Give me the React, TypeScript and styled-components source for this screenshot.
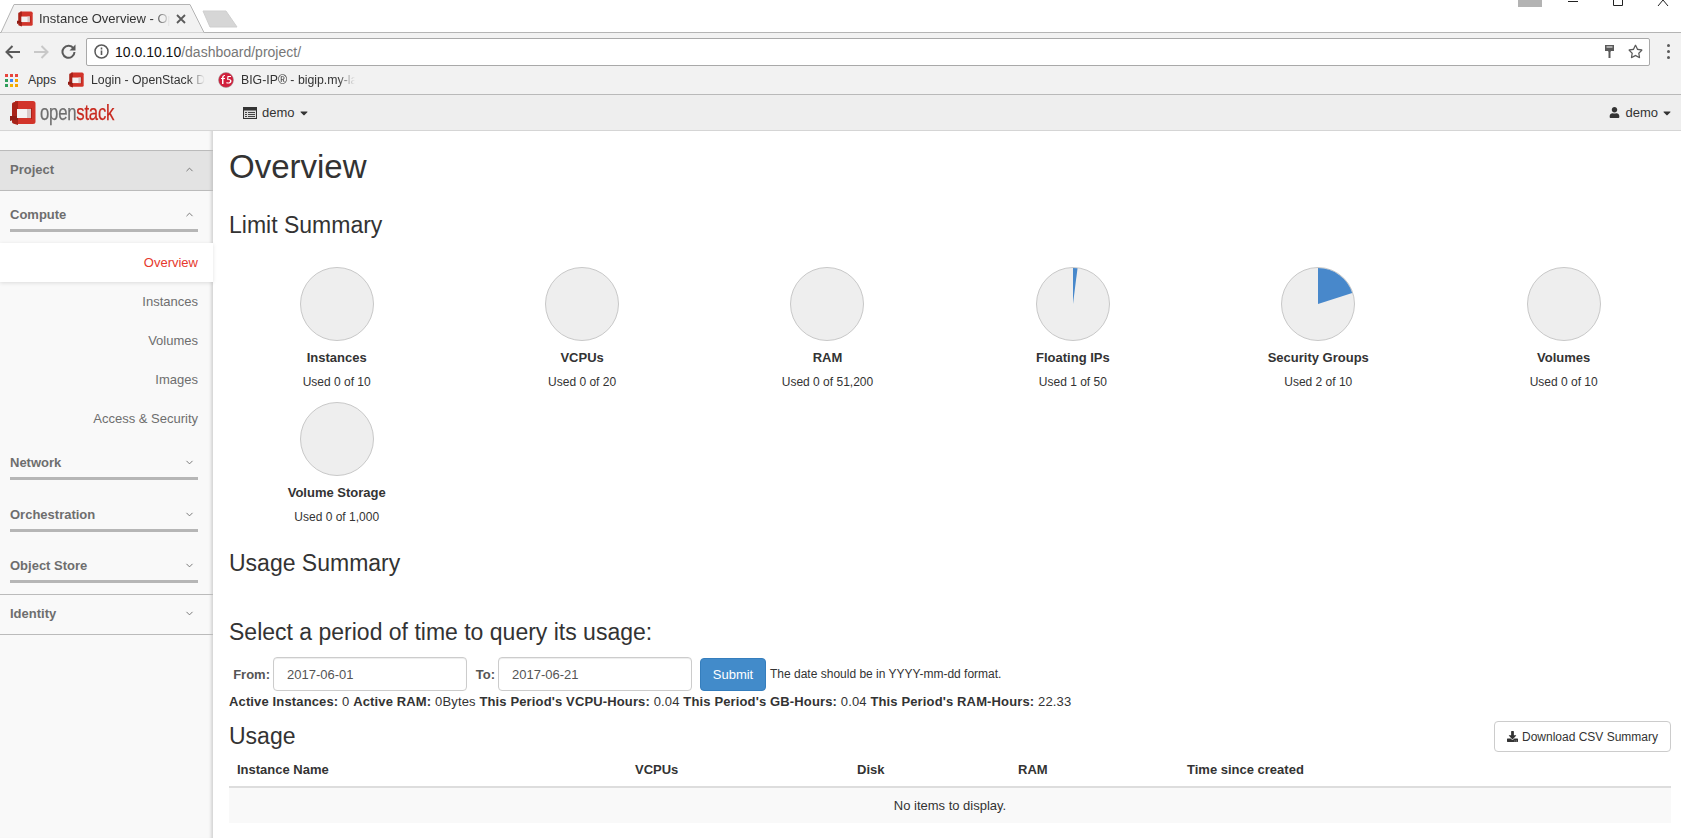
import React from 'react';
import styled, { createGlobalStyle } from 'styled-components';
import { FaCaretDown, FaDownload, FaUser, FaRegStar } from 'react-icons/fa';
import { ChevronDown, ChevronUp } from 'lucide-react';

const GlobalStyle = createGlobalStyle`
  html, body {
    margin: 0;
    padding: 0;
    background: #fff;
    font-family: "Liberation Sans", Arial, sans-serif;
    color: #333;
  }
  * { box-sizing: border-box; }
`;

const charts = [
  { name: 'Instances', used: 'Used 0 of 10', pct: 0 },
  { name: 'VCPUs', used: 'Used 0 of 20', pct: 0 },
  { name: 'RAM', used: 'Used 0 of 51,200', pct: 0 },
  { name: 'Floating IPs', used: 'Used 1 of 50', pct: 0.02 },
  { name: 'Security Groups', used: 'Used 2 of 10', pct: 0.2 },
  { name: 'Volumes', used: 'Used 0 of 10', pct: 0 },
  { name: 'Volume Storage', used: 'Used 0 of 1,000', pct: 0 },
];

const appColors = ['#e8453c', '#e8453c', '#e8453c', '#2f9e5b', '#4285f4', '#f4a400', '#2f9e5b', '#f4b400', '#f4a400'];

const OpenStackMark = ({ size }: { size: number }) => (
  <svg width={size} height={size} viewBox="0 0 26 24">
    <path d="M5 0h18a2.500 2.500 0 0 1 2.500 2.500v18a2.500 2.500 0 0 1-2.500 2.500H5z" fill="#d2342a" />
    <path d="M3 1.500L8 0v24l-5-1.500a2 2 0 0 1-1-2V3.500a2 2 0 0 1 1-2z" fill="#a92218" />
    <path d="M0 15h8v4H3l-3 1z" fill="#8f1c14" />
    <rect x="7" y="8" width="14" height="9" fill="#f4f2f2" />
    <rect x="17" y="8" width="4" height="9" fill="#d8c8c8" />
    <rect x="21" y="7" width="1" height="11" fill="#a92218" />
  </svg>
);

const Pie = ({ pct }: { pct: number }) => {
  const r = 36;
  const a = pct * 2 * Math.PI;
  const x = 37 + r * Math.sin(a);
  const y = 37 - r * Math.cos(a);
  return (
    <svg width="74" height="74" viewBox="0 0 74 74">
      <circle cx="37" cy="37" r="36.5" fill="#eeeeee" stroke="#c8c8c8" strokeWidth="1" />
      {pct > 0 && <path d={`M37 37L37 1A36 36 0 0 1 ${x} ${y}Z`} fill="#4888cb" />}
    </svg>
  );
};

const App = () => (
  <Page>
    <GlobalStyle />
    <TabStrip>
      <Tab>
        <TabShape width="206" height="29" viewBox="0 0 206 29">
          <path d="M0 28.500H1L14 .5H190L204 28.500H206" fill="#f2f2f2" stroke="#b4b4b4" />
        </TabShape>
        <OpenStackMark size={16} />
        <TabTitle>Instance Overview - OpenStack Dashboard</TabTitle>
        <CloseIcon width="10" height="10" viewBox="0 0 10 10">
          <path d="M1 1l8 8M9 1l-8 8" stroke="#5a5a5a" strokeWidth="1.800" />
        </CloseIcon>
      </Tab>
      <NewTab width="36" height="18" viewBox="0 0 36 18">
        <path d="M1 1h23l11 16H8z" fill="#d6d6d6" stroke="#cfcfcf" strokeLinejoin="round" />
      </NewTab>
      <WindowControls>
        <UserChip />
        <svg width="12" height="8" viewBox="0 0 12 8">
          <path d="M1 1.500h10" stroke="#222" />
        </svg>
        <svg width="12" height="8" viewBox="0 0 12 8">
          <path d="M1.500 0v5.500h9V0" stroke="#222" fill="none" />
        </svg>
        <svg width="12" height="8" viewBox="0 0 12 8">
          <path d="M1 6l5-6 5 6" stroke="#222" fill="none" />
        </svg>
      </WindowControls>
    </TabStrip>
    <Toolbar>
      <NavButtons>
        <svg width="16" height="14" viewBox="0 0 16 14">
          <path d="M15 7H2M7.500 1L1.500 7l6 6" stroke="#5a5a5a" strokeWidth="2" fill="none" />
        </svg>
        <svg width="16" height="14" viewBox="0 0 16 14">
          <path d="M1 7h13M8.500 1l6 6-6 6" stroke="#c8c8c8" strokeWidth="2" fill="none" />
        </svg>
        <svg width="15" height="15" viewBox="0 0 15 15">
          <path d="M12.500 4.500A6 6 0 1 0 13.500 8" stroke="#5a5a5a" strokeWidth="2" fill="none" />
          <path d="M14.500 0.500v6h-6z" fill="#5a5a5a" />
        </svg>
      </NavButtons>
      <Omnibox>
        <svg width="15" height="15" viewBox="0 0 15 15">
          <circle cx="7.500" cy="7.500" r="6.500" stroke="#5a5a5a" strokeWidth="1.500" fill="none" />
          <path d="M7.500 6.500v4.500M7.500 3.500v2" stroke="#5a5a5a" strokeWidth="1.600" />
        </svg>
        <Url>
          10.0.10.10<UrlPath>/dashboard/project/</UrlPath>
        </Url>
        <OmniIcons>
          <svg width="9" height="13" viewBox="0 0 9 13">
            <path d="M0 0h9v6H6v.5h-.5V13h-2V6.500H3V6H0z" fill="#5a5a5a" />
            <path d="M1.500 1.500h6v1h-6z" fill="#fff" />
          </svg>
          <FaRegStar size={15} color="#5a5a5a" />
        </OmniIcons>
      </Omnibox>
      <MenuDots>
        <i />
        <i />
        <i />
      </MenuDots>
    </Toolbar>
    <BookmarksBar>
      <AppsGrid>
        {appColors.map((c, i) => (
          <AppsDot key={i} $color={c} />
        ))}
      </AppsGrid>
      <Bookmark $width={28}>Apps</Bookmark>
      <BookmarkIcon $left={12}>
        <OpenStackMark size={16} />
      </BookmarkIcon>
      <Bookmark $width={114} $fade>
        Login - OpenStack Dashboard
      </Bookmark>
      <BookmarkIcon $left={13}>
        <svg width="16" height="16" viewBox="0 0 16 16">
          <circle cx="8" cy="8" r="7.500" fill="#d11f3c" stroke="#999" strokeWidth="0.500" />
          <path d="M4 12V7H3V6h1c0-2 1-3 3-3v1c-1 0-1.500.5-1.500 2H7v1H5.500v5zM8 11l1-1c1 1 3 .5 3-1s-2-1.500-3-1l.5-4H13v1h-2.500l-.2 2c2-.5 3.200.7 3.200 2 0 2.500-3.500 3.300-5.500 2z" fill="#fff" />
        </svg>
      </BookmarkIcon>
      <Bookmark $width={114} $fade>
        BIG-IP® - bigip.my-lab.local
      </Bookmark>
    </BookmarksBar>
    <TopNav>
      <Brand>
        <OpenStackMark size={26} />
        <BrandText>
          open<BrandAccent>stack</BrandAccent>
        </BrandText>
      </Brand>
      <NavMenu>
        <svg width="14" height="12" viewBox="0 0 14 12">
          <path d="M0 0h14v12H0z" fill="#333" />
          <path d="M1 3.500h12V11H1z" fill="#ddd" />
          <path d="M2 5h2v1H2zM5 5h7v1H5zM2 7h2v1H2zM5 7h7v1H5zM2 9h2v1H2zM5 9h7v1H5z" fill="#444" />
        </svg>
        demo
        <FaCaretDown size={12} />
      </NavMenu>
      <UserMenu>
        <FaUser size={11} />
        demo
        <FaCaretDown size={12} />
      </UserMenu>
    </TopNav>
    <Body>
      <Sidebar>
        <Dashboard>
          <span>Project</span>
          <ChevronUp size={11} />
        </Dashboard>
        <Group>
          <span>Compute</span>
          <ChevronUp size={11} />
        </Group>
        <NavList>
          <NavItem $active>Overview</NavItem>
          <NavItem>Instances</NavItem>
          <NavItem>Volumes</NavItem>
          <NavItem>Images</NavItem>
          <NavItem>Access &amp; Security</NavItem>
        </NavList>
        <Group>
          <span>Network</span>
          <ChevronDown size={11} />
        </Group>
        <Group $gap={10}>
          <span>Orchestration</span>
          <ChevronDown size={11} />
        </Group>
        <Group>
          <span>Object Store</span>
          <ChevronDown size={11} />
        </Group>
        <Panel>
          <span>Identity</span>
          <ChevronDown size={11} />
        </Panel>
      </Sidebar>
      <Main>
        <PageTitle>Overview</PageTitle>
        <SectionTitle>Limit Summary</SectionTitle>
        <PieGrid>
          {charts.map((c) => (
            <PieCell key={c.name}>
              <Pie pct={c.pct} />
              <PieName>{c.name}</PieName>
              <PieUsed>{c.used}</PieUsed>
            </PieCell>
          ))}
        </PieGrid>
        <UsageSummaryTitle>Usage Summary</UsageSummaryTitle>
        <PeriodTitle>Select a period of time to query its usage:</PeriodTitle>
        <PeriodForm>
          <FieldLabel $width={44}>From:</FieldLabel>
          <DateInput>2017-06-01</DateInput>
          <FieldLabel $width={25}>To:</FieldLabel>
          <DateInput>2017-06-21</DateInput>
          <SubmitButton>Submit</SubmitButton>
          <HelpText>The date should be in YYYY-mm-dd format.</HelpText>
        </PeriodForm>
        <Stats>
          <b>Active Instances:</b> 0 <b>Active RAM:</b> 0Bytes <b>This Period's VCPU-Hours:</b> 0.04{' '}
          <b>This Period's GB-Hours:</b> 0.04 <b>This Period's RAM-Hours:</b> 22.33
        </Stats>
        <UsageHeader>
          <UsageTitle>Usage</UsageTitle>
          <CsvButton>
            <FaDownload size={11} />
            Download CSV Summary
          </CsvButton>
        </UsageHeader>
        <TableHead>
          <span>Instance Name</span>
          <span>VCPUs</span>
          <span>Disk</span>
          <span>RAM</span>
          <span>Time since created</span>
        </TableHead>
        <EmptyRow>No items to display.</EmptyRow>
      </Main>
    </Body>
  </Page>
);

const Page = styled.div`
  width: 1681px;
  height: 838px;
  overflow: hidden;
  display: flex;
  flex-direction: column;
  background: #fff;
`;

const TabStrip = styled.div`
  height: 33px;
  display: flex;
  align-items: flex-end;
  border-bottom: 1px solid #b4b4b4;
`;

const Tab = styled.div`
  position: relative;
  isolation: isolate;
  width: 206px;
  height: 29px;
  margin-bottom: -1px;
  display: flex;
  align-items: center;
  padding: 0 20px 0 17px;
  font-size: 13px;
  color: #333;
  gap: 6px;
`;

const TabShape = styled.svg`
  position: absolute;
  left: 0;
  top: 0;
  z-index: -1;
`;

const TabTitle = styled.span`
  flex: 1;
  min-width: 0;
  white-space: nowrap;
  overflow: hidden;
  -webkit-mask-image: linear-gradient(to right, #000 88%, transparent 100%);
  mask-image: linear-gradient(to right, #000 88%, transparent 100%);
`;

const CloseIcon = styled.svg`
  flex-shrink: 0;
`;

const NewTab = styled.svg`
  margin: 0 0 4px -4px;
`;

const WindowControls = styled.div`
  margin-left: auto;
  align-self: flex-start;
  display: flex;
  align-items: flex-start;
  gap: 33px;
  padding-right: 12px;
  height: 8px;
`;

const UserChip = styled.div`
  width: 24px;
  height: 7px;
  background: #b3b3b3;
  margin-right: -8px;
`;

const Toolbar = styled.div`
  height: 33px;
  display: flex;
  align-items: center;
  background: #f2f2f2;
  padding: 4px 0 0 5px;
`;

const NavButtons = styled.div`
  width: 81px;
  display: flex;
  align-items: center;
  gap: 12px;
`;

const Omnibox = styled.div`
  width: 1564px;
  height: 28px;
  background: #fff;
  border: 1px solid #a9a9a9;
  border-radius: 2px;
  display: flex;
  align-items: center;
  padding: 0 6px 0 7px;
  gap: 6px;
`;

const Url = styled.span`
  font-size: 14px;
  color: #111;
`;

const UrlPath = styled.span`
  color: #777;
`;

const OmniIcons = styled.div`
  margin-left: auto;
  display: flex;
  align-items: center;
  gap: 14px;
`;

const MenuDots = styled.div`
  margin-left: 17px;
  display: flex;
  flex-direction: column;
  gap: 3px;

  i {
    width: 3px;
    height: 3px;
    border-radius: 50%;
    background: #5a5a5a;
  }
`;

const BookmarksBar = styled.div`
  height: 29px;
  background: #f2f2f2;
  border-bottom: 1px solid #b9b9b9;
  display: flex;
  align-items: center;
  padding-left: 5px;
`;

const AppsGrid = styled.div`
  display: grid;
  grid-template-columns: repeat(3, 3px);
  grid-auto-rows: 3px;
  gap: 2px;
  margin-right: 10px;
`;

const AppsDot = styled.span<{ $color: string }>`
  background: ${(p) => p.$color};
`;

const Bookmark = styled.span<{ $width: number; $fade?: boolean }>`
  width: ${(p) => p.$width}px;
  font-size: 12.3px;
  color: #333;
  white-space: nowrap;
  overflow: hidden;
  ${(p) =>
    p.$fade &&
    `-webkit-mask-image: linear-gradient(to right, #000 85%, transparent 100%);
     mask-image: linear-gradient(to right, #000 85%, transparent 100%);`}
`;

const BookmarkIcon = styled.span<{ $left: number }>`
  display: flex;
  margin: 0 7px 0 ${(p) => p.$left}px;
`;

const TopNav = styled.div`
  height: 36px;
  background: #eeeeee;
  border-bottom: 1px solid #d5d5d5;
  display: flex;
  align-items: center;
  font-size: 13px;
  color: #333;
`;

const Brand = styled.div`
  width: 243px;
  padding-left: 10px;
  display: flex;
  align-items: center;
  gap: 4px;
`;

const BrandText = styled.span`
  display: inline-block;
  font-size: 22px;
  letter-spacing: -0.3px;
  color: #6f6f6f;
  -webkit-text-stroke: 0.25px currentColor;
  transform: scaleX(0.76);
  transform-origin: left center;
`;

const BrandAccent = styled.span`
  color: #c8281e;
`;

const NavMenu = styled.div`
  display: flex;
  align-items: center;
  gap: 5px;

  svg:last-child {
    margin-left: -2px;
  }
`;

const UserMenu = styled(NavMenu)`
  margin-left: auto;
  padding-right: 8px;
`;

const Body = styled.div`
  flex: 1;
  display: flex;
  min-height: 0;
`;

const Sidebar = styled.nav`
  width: 213px;
  flex-shrink: 0;
  background: #f9f9f9;
  box-shadow: inset -4px 0 3px -2px rgba(0, 0, 0, 0.15);
  padding-top: 19px;
  font-size: 13px;
  color: #6e6e6e;
`;

const Dashboard = styled.div`
  height: 41px;
  background: #e3e3e3;
  border-top: 1px solid #bbb;
  border-bottom: 1px solid #bbb;
  display: flex;
  align-items: center;
  justify-content: space-between;
  padding: 0 18px 2px 10px;
  font-weight: bold;
  box-shadow: inset -4px 0 3px -2px rgba(0, 0, 0, 0.12);
`;

const Group = styled.div<{ $gap?: number }>`
  height: 41px;
  margin: 0 15px ${(p) => p.$gap ?? 11}px 10px;
  border-bottom: 3px solid #b6b6b6;
  display: flex;
  align-items: center;
  justify-content: space-between;
  padding: 8px 3px 0 0;
  font-weight: bold;
`;

const NavList = styled.div`
  margin-bottom: 1px;
`;

const NavItem = styled.div<{ $active?: boolean }>`
  height: 39px;
  display: flex;
  align-items: center;
  justify-content: flex-end;
  padding-right: 15px;
  ${(p) =>
    p.$active &&
    `color: #e6392d;
     background: #fff;
     box-shadow: 0 1px 4px rgba(0, 0, 0, 0.12);
     position: relative;`}
`;

const Panel = styled.div`
  height: 41px;
  border-top: 1px solid #bbb;
  border-bottom: 1px solid #bbb;
  display: flex;
  align-items: center;
  justify-content: space-between;
  padding: 0 18px 2px 10px;
  font-weight: bold;
`;

const Main = styled.main`
  flex: 1;
  min-width: 0;
  padding: 16px 10px 0 16px;
  overflow: hidden;
`;

const PageTitle = styled.h1`
  margin: 0;
  font-size: 33px;
  font-weight: 400;
  line-height: 40px;
`;

const SectionTitle = styled.h3`
  margin: 25px 0 0;
  font-size: 23px;
  font-weight: 400;
  line-height: 26px;
`;

const PieGrid = styled.div`
  margin: 29px 0 0 -15px;
  width: 1473px;
  display: grid;
  grid-template-columns: repeat(6, 245.4px);
  grid-auto-rows: 135px;
`;

const PieCell = styled.div`
  display: flex;
  flex-direction: column;
  align-items: center;
`;

const PieName = styled.div`
  margin-top: 8px;
  font-size: 13px;
  font-weight: bold;
  line-height: 18px;
`;

const PieUsed = styled.div`
  margin-top: 6px;
  font-size: 12px;
  line-height: 18px;
`;

const UsageSummaryTitle = styled(SectionTitle)`
  margin-top: 13px;
`;

const PeriodTitle = styled(SectionTitle)`
  margin-top: 43px;
`;

const PeriodForm = styled.div`
  margin-top: 12px;
  height: 34px;
  display: flex;
  align-items: center;
`;

const FieldLabel = styled.span<{ $width: number }>`
  width: ${(p) => p.$width}px;
  text-align: right;
  padding-right: 3px;
  font-size: 13px;
  font-weight: bold;
  color: #555;
`;

const DateInput = styled.div`
  width: 194px;
  height: 34px;
  margin-right: 6px;
  border: 1px solid #ccc;
  border-radius: 4px;
  padding: 0 13px;
  display: flex;
  align-items: center;
  font-size: 13px;
  color: #555;
  box-shadow: inset 0 1px 1px rgba(0, 0, 0, 0.075);
`;

const SubmitButton = styled.div`
  width: 66px;
  height: 33px;
  margin-left: 2px;
  background: #428bca;
  border: 1px solid #357ebd;
  border-radius: 4px;
  color: #fff;
  font-size: 13px;
  display: flex;
  align-items: center;
  justify-content: center;
`;

const HelpText = styled.span`
  margin-left: 4px;
  font-size: 12px;
`;

const Stats = styled.div`
  margin-top: 2px;
  font-size: 13px;
  letter-spacing: 0.14px;
  line-height: 18px;
`;

const UsageHeader = styled.div`
  margin-top: 10px;
  height: 31px;
  display: flex;
  align-items: center;
  justify-content: space-between;
`;

const UsageTitle = styled.h3`
  margin: 0;
  font-size: 23px;
  font-weight: 400;
`;

const CsvButton = styled.div`
  width: 177px;
  height: 31px;
  border: 1px solid #ccc;
  border-radius: 4px;
  display: flex;
  align-items: center;
  justify-content: center;
  gap: 4px;
  font-size: 12px;
`;

const TableHead = styled.div`
  height: 36px;
  border-bottom: 2px solid #dddddd;
  display: grid;
  grid-template-columns: 398px 222px 161px 169px 1fr;
  align-items: center;
  font-size: 13px;
  font-weight: bold;

  span {
    padding-left: 8px;
  }
`;

const EmptyRow = styled.div`
  height: 35px;
  background: #f9f9f9;
  display: flex;
  align-items: center;
  justify-content: center;
  font-size: 13px;
`;

export default App;
